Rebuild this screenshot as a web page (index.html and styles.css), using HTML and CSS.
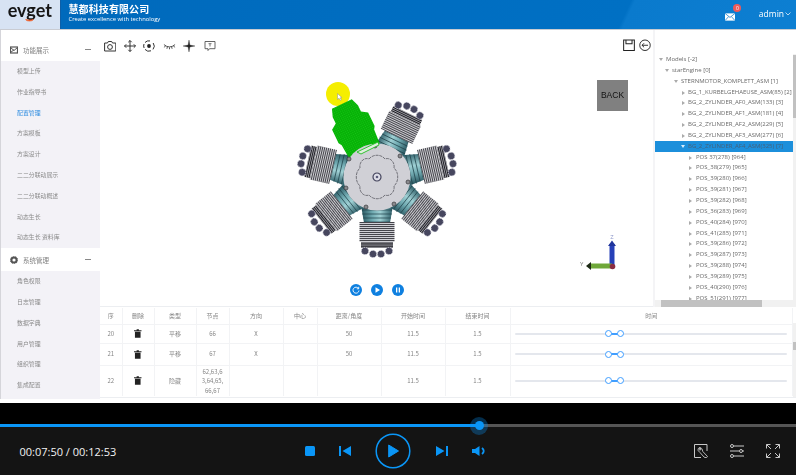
FILE: index.html
```html
<!DOCTYPE html>
<html lang="zh">
<head>
<meta charset="utf-8">
<title>慧都科技有限公司</title>
<link rel="stylesheet" href="styles.css">
</head>
<body>
<div class="app">
  <div class="screen">
    <header class="topbar">
      <div class="brand">
        <span class="logo-word">evget</span>
        <svg class="logo-smile" viewBox="0 0 14 4"><path d="M1 .6C3 3.6 11 3.6 13 .6C10 1.4 4 1.4 1 .6Z" fill="#ee5a24" stroke="#ee5a24"/></svg>
      </div>
      <div class="title">
        <div class="title-cn">慧都科技有限公司</div>
        <div class="title-en">Create excellence with technology</div>
      </div>
      <div class="user">
        <span class="mail">
          <svg class="mail-icon" viewBox="0 0 11 8"><rect width="11" height="8" fill="#fff"/><path d="M0 0L5.500 4.500L11 0M0 8L4 3.500M11 8L7 3.500" fill="none" stroke="#0b78c8" stroke-width=".8"/></svg>
          <span class="badge">0</span>
        </span>
        <span class="admin">admin</span>
        <svg class="chev" viewBox="0 0 6 4"><path d="M.5.5L3 3L5.500.5" fill="none" stroke="#fff" stroke-width=".7"/></svg>
      </div>
    </header>
    <div class="content">
      <aside class="side">
        <div class="group group-one">
          <svg class="group-icon" viewBox="0 0 8 8"><rect x=".5" y="1" width="7" height="6" fill="none" stroke="#555" stroke-width="1.200"/><path d="M.5 1.500L4 4.500L7.500 1.500M.5 6.500L4 3.800" stroke="#555" fill="none"/></svg>
          <span class="group-name">功能展示</span><span class="dash"></span>
        </div>
        <ul class="items">
          <li>模型上传</li><li>作业指导书</li><li class="on">配置管理</li><li>方案模板</li><li>方案设计</li>
          <li>二二分联动展示</li><li>二二分联动概述</li><li>动态生长</li><li>动态生长 资料库</li>
        </ul>
        <div class="group group-two">
          <svg class="group-icon" viewBox="0 0 8 8"><circle cx="4" cy="4" r="2.600" fill="none" stroke="#555" stroke-width="2"/><circle cx="4" cy="4" r="3.700" fill="none" stroke="#555" stroke-width=".8" stroke-dasharray="1.200 1.100"/></svg>
          <span class="group-name">系统管理</span><span class="dash"></span>
        </div>
        <ul class="items">
          <li>角色权限</li><li>日志管理</li><li>数据字典</li><li>用户管理</li><li>组织管理</li><li>集成配置</li>
        </ul>
      </aside>
      <main class="main">
        <div class="work">
          <section class="viewer">
            <div class="tools">
              <div class="tools-left">
                <svg class="tool" viewBox="0 0 12 12"><path d="M.6 3h2.900l.8-1.500h3.400l.8 1.500h3.300v8H.6Z" fill="none" stroke="#333" stroke-width="1"/><circle cx="6" cy="7" r="2.400" fill="none" stroke="#333"/></svg>
                <svg class="tool" viewBox="0 0 12 12"><path d="M6 .5V11.500M.5 6H11.500M4.300 2.200L6 .5L7.700 2.200M4.300 9.800L6 11.500L7.700 9.800M2.200 4.300L.5 6L2.200 7.700M9.800 4.300L11.500 6L9.800 7.700" fill="none" stroke="#333" stroke-width="1"/></svg>
                <svg class="tool" viewBox="0 0 12 12"><path d="M2 2.500A5.200 5.200 0 0 1 7 .9M10.200 3A5.200 5.200 0 0 1 10 9.400M8 10.800A5.200 5.200 0 0 1 2 9.400M1.100 8A5.200 5.200 0 0 1 1 4" fill="none" stroke="#333" stroke-width="1"/><circle cx="6" cy="6" r="1.900" fill="#222"/></svg>
                <svg class="tool tool-lash" viewBox="0 0 14 12"><path d="M1 4.500Q7 9.500 13 4.500M2.500 5.800L1.500 7.500M4.700 7L4.200 9M7 7.500V9.500M9.300 7L9.800 9M11.500 5.800L12.500 7.500" fill="none" stroke="#333" stroke-width=".9"/></svg>
                <svg class="tool" viewBox="0 0 12 12"><path d="M6 0L6.900 5.100L12 6L6.900 6.900L6 12L5.100 6.900L0 6L5.100 5.100Z" fill="#222" stroke="#222" stroke-width=".3"/></svg>
                <svg class="tool tool-note" viewBox="0 0 12 12"><path d="M1 1.500H11V8.700H5.500L4 10.500V8.700H1Z" fill="none" stroke="#555" stroke-width=".9"/><path d="M4.500 3.700H7.500M6 3.700V6.500" stroke="#555" stroke-width=".8"/></svg>
              </div>
              <div class="tools-right">
                <svg class="tool-big" viewBox="0 0 13 13"><path d="M.7.7H12.300V12.300H.7ZM3.200.7V5H9.800V.7" fill="none" stroke="#222" stroke-width="1.100"/></svg>
                <svg class="tool-big" viewBox="0 0 13 13"><circle cx="6.500" cy="6.500" r="5.700" fill="none" stroke="#222"/><path d="M9.800 6.500H3.300M5.500 4.300L3.300 6.500L5.500 8.700" fill="none" stroke="#222"/></svg>
              </div>
            </div>
            <div class="spot"><svg class="pointer" viewBox="0 0 6 8"><path d="M.5.500V6.500L2 5.200L3.400 7.500L4.400 6.900L3.200 4.800H5Z" fill="#fff" stroke="#8a8a8a" stroke-width=".5"/></svg></div>
            <svg class="engine" viewBox="-85 -85 170 170">
              <defs>
                <pattern id="fins" width="4" height="2" patternUnits="userSpaceOnUse"><rect width="4" height="2" fill="#cfcfd4"/><rect y="1.100" width="4" height=".9" fill="#34343a"/></pattern>
                <pattern id="headfins" width="4" height="1.800" patternUnits="userSpaceOnUse"><rect width="4" height="1.800" fill="#9a9aa0"/><rect y=".9" width="4" height=".9" fill="#1d1d24"/></pattern>
                <linearGradient id="teal"><stop offset="0" stop-color="#24505a"/><stop offset=".35" stop-color="#6fa9b0"/><stop offset=".6" stop-color="#9fd0d4"/><stop offset="1" stop-color="#2a5a64"/></linearGradient>
                <pattern id="greenmesh" width="2" height="2" patternUnits="userSpaceOnUse"><rect width="2" height="2" fill="#07b007"/><rect width="1" height="1" fill="#14c814"/></pattern>
                <g id="cyl">
                  <path d="M-16 28H16L13 46H-13Z" fill="url(#teal)"/>
                  <path d="M-15 33H15M-15 37H15M-14 41H14M-13 45H13" stroke="#1d3f47" stroke-width=".7"/>
                  <rect x="-17.500" y="45" width="35" height="20" fill="url(#fins)"/>
                  <rect x="-16" y="65" width="32" height="6" fill="url(#headfins)"/>
                  <g fill="#46465e" stroke="#d6d6e0" stroke-width=".8" stroke-dasharray="1.200 1">
                    <circle cx="-12" cy="74" r="3.600"/><circle cx="-4" cy="77" r="3.600"/><circle cx="4" cy="77" r="3.600"/><circle cx="12" cy="74" r="3.600"/>
                  </g>
                </g>
              </defs>
              <use href="#cyl"/>
              <use href="#cyl" transform="rotate(51.430)"/>
              <use href="#cyl" transform="rotate(102.860)"/>
              <use href="#cyl" transform="rotate(205.710)"/>
              <use href="#cyl" transform="rotate(257.140)"/>
              <use href="#cyl" transform="rotate(308.570)"/>
              <path d="M-17 29L17 29L18 44L20 47V62L14 66V73L11 81H-11L-14 73V66L-20 62V47L-18 44Z" fill="url(#greenmesh)" transform="rotate(154.290)"/>
              <circle r="33.500" fill="#d0d0d6"/>
              <path d="M-8 -18C-4 -23 4 -23 8 -18C13 -20 18 -15 17 -9C22 -5 22 5 17 9C18 15 13 20 8 18C4 23 -4 23 -8 18C-13 20 -18 15 -17 9C-22 5 -22 -5 -17 -9C-18 -15 -13 -20 -8 -18Z" fill="none" stroke="#33333a" stroke-width=".6" stroke-dasharray="3 .8"/>
              <circle r="4" fill="#dedee8" stroke="#44445c" stroke-width="1.200"/>
              <circle r="1.300" fill="#5a5a78"/>
              <g fill="#8a8a8e" stroke="#38383c" stroke-width=".7">
                <circle cy="-31" cx="-2" r="2"/><circle cx="23" cy="-21" r="2"/><circle cx="31" cy="5" r="2"/><circle cx="17" cy="27" r="2"/><circle cx="-11" cy="30" r="2"/><circle cx="-31" cy="11" r="2"/><circle cx="-28" cy="-18" r="2"/>
              </g>
              <path d="M-20 -25L1 -35L2 -32L-16 -23Z" fill="#dfeedd" stroke="#20c020" stroke-width=".9"/>
            </svg>
            <div class="back-btn">BACK</div>
            <svg class="axis" viewBox="0 0 50 50">
              <text x="32" y="8" class="axis-z">Z</text>
              <text x="0" y="35" class="axis-y">Y</text>
              <path d="M32 36V13" stroke="#2640b8" stroke-width="5"/><path d="M28 15L32 9.500L36 15Z" fill="#20359c"/>
              <path d="M32 35H10" stroke="#6fa83a" stroke-width="5"/><path d="M11 31L6 35L11 39Z" fill="#1c2a14"/>
              <circle cx="32.500" cy="35.500" r="2.800" fill="#8b2d42"/>
            </svg>
            <div class="playback">
              <svg class="pb" viewBox="0 0 12 12"><circle cx="6" cy="6" r="6" fill="#0f80e0"/><path d="M8.500 4.500A3 3 0 1 0 9 6.500M8.700 2.800V4.800H6.800" fill="none" stroke="#fff" stroke-width=".9"/></svg>
              <svg class="pb" viewBox="0 0 12 12"><circle cx="6" cy="6" r="6" fill="#0f80e0"/><path d="M4.500 3.300L9 6L4.500 8.700Z" fill="#fff"/></svg>
              <svg class="pb" viewBox="0 0 12 12"><circle cx="6" cy="6" r="6" fill="#0f80e0"/><path d="M4 3.500H5.300V8.500H4ZM6.700 3.500H8V8.500H6.700Z" fill="#fff"/></svg>
            </div>
          </section>
          <section class="tree-panel">
            <div class="tree-body">
              <ul class="tree">
                <li class="l0">Models [-2]</li>
                <li class="l1">starEngine [0]</li>
                <li class="l2">STERNMOTOR_KOMPLETT_ASM [1]</li>
                <li class="l3 leaf">BG_1_KURBELGEHAEUSE_ASM(85) [2]</li>
                <li class="l3 leaf">BG_2_ZYLINDER_AF0_ASM(133) [3]</li>
                <li class="l3 leaf">BG_2_ZYLINDER_AF1_ASM(181) [4]</li>
                <li class="l3 leaf">BG_2_ZYLINDER_AF2_ASM(229) [5]</li>
                <li class="l3 leaf">BG_2_ZYLINDER_AF3_ASM(277) [6]</li>
                <li class="l3 sel">BG_2_ZYLINDER_AF4_ASM(325) [7]</li>
                <li class="l4 leaf">POS 37(278) [964]</li>
                <li class="l4 leaf">POS_38(279) [965]</li>
                <li class="l4 leaf">POS_39(280) [966]</li>
                <li class="l4 leaf">POS_39(281) [967]</li>
                <li class="l4 leaf">POS_39(282) [968]</li>
                <li class="l4 leaf">POS_36(283) [969]</li>
                <li class="l4 leaf">POS_40(284) [970]</li>
                <li class="l4 leaf">POS_41(285) [971]</li>
                <li class="l4 leaf">POS_39(286) [972]</li>
                <li class="l4 leaf">POS_39(287) [973]</li>
                <li class="l4 leaf">POS_39(288) [974]</li>
                <li class="l4 leaf">POS_39(289) [975]</li>
                <li class="l4 leaf">POS_40(290) [976]</li>
                <li class="l4 leaf">POS_51(291) [977]</li>
              </ul>
              <div class="vbar"><div class="vthumb"></div></div>
            </div>
            <div class="hbar"><div class="hthumb"></div></div>
          </section>
        </div>
        <div class="table-wrap">
          <table class="steps">
            <colgroup>
              <col class="c-no"><col class="c-del"><col class="c-type"><col class="c-node"><col class="c-dir"><col class="c-center"><col class="c-dist"><col class="c-start"><col class="c-end"><col>
            </colgroup>
            <thead>
              <tr><th>序</th><th>删除</th><th>类型</th><th>节点</th><th>方向</th><th>中心</th><th>距离/角度</th><th>开始时间</th><th>结束时间</th><th>时间</th></tr>
            </thead>
            <tbody>
              <tr class="r1">
                <td>20</td><td><svg class="trash" viewBox="0 0 8 9"><path d="M2.800 0H5.200V1H8V2H0V1H2.800ZM1 2.600H7V9H1Z" fill="#222"/></svg></td><td>平移</td><td>66</td><td>X</td><td></td><td>50</td><td>11.5</td><td>1.5</td>
                <td><div class="slider"><span class="range"></span><span class="knob k1"></span><span class="knob k2"></span></div></td>
              </tr>
              <tr class="r2">
                <td>21</td><td><svg class="trash" viewBox="0 0 8 9"><path d="M2.800 0H5.200V1H8V2H0V1H2.800ZM1 2.600H7V9H1Z" fill="#222"/></svg></td><td>平移</td><td>67</td><td>X</td><td></td><td>50</td><td>11.5</td><td>1.5</td>
                <td><div class="slider"><span class="range"></span><span class="knob k1"></span><span class="knob k2"></span></div></td>
              </tr>
              <tr class="r3">
                <td>22</td><td><svg class="trash" viewBox="0 0 8 9"><path d="M2.800 0H5.200V1H8V2H0V1H2.800ZM1 2.600H7V9H1Z" fill="#222"/></svg></td><td>隐藏</td><td>62,63,6<br>3,64,65,<br>66,67</td><td></td><td></td><td></td><td>11.5</td><td>1.5</td>
                <td><div class="slider"><span class="range"></span><span class="knob k1"></span><span class="knob k2"></span></div></td>
              </tr>
            </tbody>
          </table>
          <div class="table-bar"><div class="table-thumb"></div></div>
        </div>
      </main>
    </div>
  </div>
  <div class="player">
    <div class="progress"><div class="played"></div><div class="handle"></div></div>
    <div class="controls">
      <div class="time">00:07:50 / 00:12:53</div>
      <div class="transport">
        <svg class="ctl stop" viewBox="0 0 10 10"><rect width="10" height="10" rx="1.500" fill="#0a96f7"/></svg>
        <svg class="ctl prev" viewBox="0 0 12 10"><path d="M0 0H2V10H0ZM12 0V10L3.500 5Z" fill="#0a96f7"/></svg>
        <svg class="ctl playbtn" viewBox="0 0 36 36"><circle cx="18" cy="18" r="16.800" fill="none" stroke="#0a96f7" stroke-width="1.500"/><path d="M13.700 12L23.500 18L13.700 24Z" fill="#0a96f7" stroke="#0a96f7" stroke-linejoin="round"/></svg>
        <svg class="ctl next" viewBox="0 0 12 10"><path d="M10 0H12V10H10ZM0 0V10L8.500 5Z" fill="#0a96f7"/></svg>
        <svg class="ctl vol" viewBox="0 0 14 10"><path d="M0 3H3L7.500 0V10L3 7H0Z" fill="#0a96f7"/><path d="M10 2Q13.500 5 10 8" fill="none" stroke="#0a96f7" stroke-width="1.800"/></svg>
      </div>
      <div class="extras">
        <svg class="ext" viewBox="0 0 14 14"><path d="M13 7V.5H.5V13.500H7" fill="none" stroke="#c8c8c8"/><path d="M5.500 3.500A2.500 2.500 0 0 0 4.200 6.700L6 8.500L10 13C11 14 13.500 13.500 13.500 12.500L8.800 7.500L8 5C7.500 4 6.500 3.500 5.800 3.500L7 5.300L5.800 6.300Z" fill="none" stroke="#c8c8c8" stroke-width=".9"/></svg>
        <svg class="ext" viewBox="0 0 14 14"><path d="M3.500 2H14M0 7H9M12.500 7H14M3.500 12H14" stroke="#c8c8c8"/><circle cx="2" cy="2" r="1.500" fill="none" stroke="#c8c8c8"/><circle cx="11" cy="7" r="1.500" fill="none" stroke="#c8c8c8"/><circle cx="2" cy="12" r="1.500" fill="none" stroke="#c8c8c8"/></svg>
        <svg class="ext" viewBox="0 0 14 14"><path d="M.5 4.500V.5H4.500M9.500.5H13.500V4.500M.5 9.500V13.500H4.500M9.500 13.500H13.500V9.500M.5.5L5 5M13.500.5L9 5M.5 13.500L5 9M13.500 13.500L9 9" fill="none" stroke="#c8c8c8"/></svg>
      </div>
    </div>
  </div>
</div>
</body>
</html>
```
FILE: styles.css
```css
* { box-sizing: border-box; }
html, body { margin: 0; padding: 0; background: #000; }
ul { list-style: none; margin: 0; padding: 0; }
.app { width: 796px; height: 475px; display: flex; flex-direction: column; overflow: hidden; font-family: "Noto Sans CJK SC", "Noto Sans", sans-serif; }

.screen { height: 403px; background: #fff; display: flex; flex-direction: column; overflow: hidden; filter: blur(.5px); }
.topbar { height: 30px; flex: none; display: flex; align-items: stretch; border-bottom: 1px solid #c9ccd2; background: linear-gradient(115deg, #0069bb 0%, #0070c4 78%, #0a7acd 78.5%, #0d7fd2 100%); color: #fff; }
.brand { width: 60.500px; flex: none; background: #d7e3f3; display: flex; flex-direction: column; align-items: center; padding-top: 3px; border-right: 1px solid #0d5fa8; }
.logo-word { font: 700 18px/19px Lato, sans-serif; color: #151515; margin-top: -2px; }
.logo-smile { width: 9px; height: 3px; display: block; margin-top: -1px; }
.title { margin-left: 8px; padding-top: 2px; }
.title-cn { font: 700 10px/13px "Noto Sans CJK SC", sans-serif; letter-spacing: .1px; }
.title-en { font: 400 5.800px/8px "Open Sans", sans-serif; white-space: nowrap; }
.user { margin-left: auto; display: flex; align-items: center; padding: 0 5px 2px 0; }
.mail { position: relative; display: block; margin-right: 24px; margin-top: 6px; }
.mail-icon { display: block; width: 10px; height: 8px; }
.badge { position: absolute; left: 8.500px; top: -9px; width: 8px; height: 8px; border-radius: 50%; background: #ef5a5a; font: 5px/8px "Open Sans", sans-serif; text-align: center; }
.admin { font: 400 8.500px/12px "Open Sans", sans-serif; }
.chev { width: 6px; height: 4px; margin-left: 1px; }

.content { flex: 1; display: flex; min-height: 0; }
.side { width: 100px; flex: none; height: 369px; border-left: 1px solid #d5d5da; background: #f3f2f7; color: #8a8a8a; font-size: 5.900px; }
.group { background: #fff; display: flex; align-items: center; padding: 0 9px 0 9px; color: #808080; font-size: 6.500px; }
.group-one { height: 31px; padding-top: 8px; }
.group-two { height: 23px; }
.group-icon { width: 8px; height: 8px; flex: none; margin-right: 5px; }
.group-name { flex: 1; }
.dash { width: 6px; height: 1px; background: #888; }
.items li { height: 20.800px; line-height: 20.800px; padding-left: 16px; white-space: nowrap; }
.items li.on { color: #2d8ce0; }

.main { flex: 1; min-width: 0; display: flex; flex-direction: column; }
.work { height: 277px; flex: none; display: flex; border-bottom: 1px solid #eceef1; }
.viewer { flex: 1; position: relative; }
.tools { display: flex; justify-content: space-between; padding: 10px 2px 0 4px; }
.tools-left { display: flex; gap: 7.500px; }
.tools-right { display: flex; gap: 4.500px; margin-top: -1px; }
.tool { width: 12px; height: 12px; display: block; }
.tool-lash { width: 13px; }
.tool-note { margin-left: 1px; }
.tool-big { width: 12px; height: 12.500px; display: block; }
.spot { position: absolute; left: 226px; top: 52px; width: 24px; height: 24px; border-radius: 50%; background: #f5ee00; }
.pointer { position: absolute; left: 11px; top: 11px; width: 6px; height: 8px; }
.engine { position: absolute; left: 192px; top: 62px; width: 170px; height: 170px; }
.back-btn { position: absolute; left: 497px; top: 50px; width: 31px; height: 31px; background: #808080; color: #111; font: 400 8.500px/31px "Liberation Sans", sans-serif; text-align: center; }
.axis { position: absolute; left: 480px; top: 201px; width: 50px; height: 50px; }
.axis-z { font: 6px "Open Sans", sans-serif; fill: #8a94c8; text-anchor: middle; }
.axis-y { font: 6px "Open Sans", sans-serif; fill: #777; }
.playback { position: absolute; left: 250px; top: 254px; display: flex; gap: 9px; }
.pb { width: 12px; height: 12px; display: block; }

.tree-panel { width: 143px; flex: none; display: flex; flex-direction: column; height: 277px; padding-top: 24px; border-left: 2px solid #f4f4f6; }
.tree-body { flex: 1; min-height: 0; display: flex; overflow: hidden; }
.tree { flex: 1; min-width: 0; overflow: hidden; font: 400 6px/10.850px "Open Sans", sans-serif; color: #6a6a6a; }
.tree li { height: 10.850px; white-space: nowrap; position: relative; }
.tree li::before { content: ""; position: absolute; top: 4px; border-style: solid; }
.l0 { padding-left: 11px; }
.l1 { padding-left: 17px; }
.l2 { padding-left: 26px; }
.l3 { padding-left: 33px; }
.l4 { padding-left: 41px; }
.l0::before { left: 4px; border-width: 3px 2px 0; border-color: #aaa transparent transparent; }
.l1::before { left: 10px; border-width: 3px 2px 0; border-color: #aaa transparent transparent; }
.l2::before { left: 19px; border-width: 3px 2px 0; border-color: #aaa transparent transparent; }
.l3.leaf::before { left: 27px; border-width: 2px 0 2px 3px; border-color: transparent transparent transparent #aaa; }
.l4.leaf::before { left: 34px; border-width: 2px 0 2px 3px; border-color: transparent transparent transparent #aaa; }
.tree li.sel { background: #1c8fdb; color: #44607a; }
.sel::before { left: 26px; border-width: 3px 2px 0; border-color: #d8ecfa transparent transparent; }
.vbar { width: 3px; flex: none; background: #f1f1f1; }
.vthumb { height: 63px; background: #c1c1c1; margin-top: 1px; }
.hbar { height: 7px; flex: none; background: #f1f1f1; padding-left: 6px; }
.hthumb { width: 101px; height: 7px; background: #c1c1c1; }

.table-wrap { display: flex; height: 90px; flex: none; margin-top: 1px; border-bottom: 1px solid #eceef1; color: #858585; font-size: 6px; }
.steps { flex: 1; border-collapse: collapse; table-layout: fixed; width: 693px; height: 88px; }
.c-no { width: 22px; }
.c-del { width: 32px; }
.c-type { width: 42px; }
.c-node { width: 33px; }
.c-dir { width: 54px; }
.c-center { width: 34px; }
.c-dist { width: 64px; }
.c-start { width: 64px; }
.c-end { width: 65px; }
.steps th, .steps td { text-align: center; padding: 0; font-weight: 400; border-right: 1px solid #f2f3f5; border-bottom: 1px solid #f2f3f5; line-height: 9.500px; }
.steps th { height: 16px; }
.steps tbody tr.r3 td { border-bottom: 0; }
.r1 td { height: 19px; }
.r2 td { height: 22px; }
.r3 td { height: 31px; }
.trash { width: 7.500px; height: 9px; display: block; margin: 0 auto; }
.slider { position: relative; height: 2px; background: #e4e7ed; margin: 0 5px 0 4px; border-radius: 1px; }
.range { position: absolute; left: 34.400%; width: 4.400%; top: 0; height: 2px; background: #409eff; }
.knob { position: absolute; top: -2.500px; width: 7px; height: 7px; border-radius: 50%; border: 1px solid #409eff; background: #fff; }
.k1 { left: calc(34.400% - 3.500px); }
.k2 { left: calc(38.800% - 3.500px); }
.table-bar { width: 3px; flex: none; background: #f1f1f1; padding-top: 19px; margin-top: 15px; }
.table-thumb { height: 8px; background: #c1c1c1; }

.player { flex: 1; background: #000; padding-top: 21px; display: flex; flex-direction: column; }
.progress { height: 3px; background: #555; position: relative; flex: none; }
.played { width: 479px; height: 3px; background: #0a96f7; }
.handle { position: absolute; left: 470px; top: -7.500px; width: 18px; height: 18px; border-radius: 50%; background: rgba(10, 150, 247, .3); }
.handle::after { content: ""; position: absolute; left: 4.500px; top: 4.500px; width: 9px; height: 9px; border-radius: 50%; background: #0a96f7; }
.controls { flex: 1; background: #141414; display: flex; align-items: center; padding: 0 16px 1px 19.500px; }
.time { width: 285px; flex: none; font: 400 11px/16px "Open Sans", sans-serif; color: #f2f2f2; white-space: nowrap; padding-top: 3px; }
.transport { display: flex; align-items: center; }
.ctl { display: block; flex: none; }
.stop { width: 10px; height: 10px; margin-right: 24px; }
.prev { width: 12px; height: 10px; margin-right: 24px; }
.playbtn { width: 36px; height: 36px; margin-right: 25px; }
.next { width: 12px; height: 10px; margin-right: 24px; }
.vol { width: 14px; height: 10px; }
.extras { margin-left: auto; display: flex; gap: 22px; }
.ext { width: 14px; height: 14px; display: block; }
```
